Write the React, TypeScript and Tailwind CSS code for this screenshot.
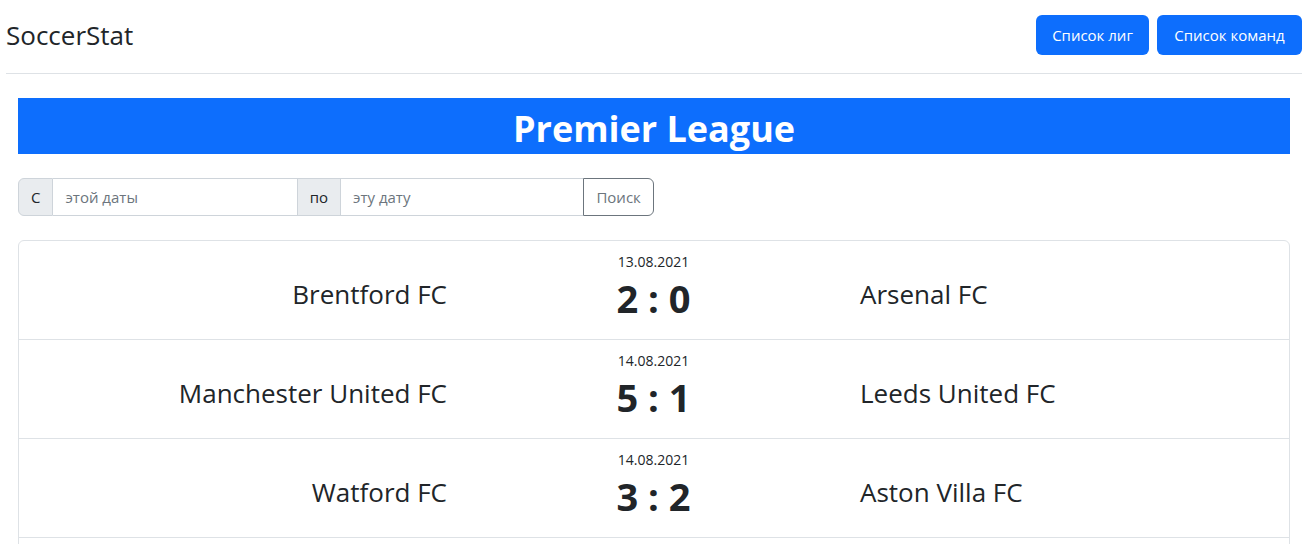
import React from "react";

interface Match {
  date: string;
  home: string;
  away: string;
  score: string;
}

const matches: Match[] = [
  { date: "13.08.2021", home: "Brentford FC", away: "Arsenal FC", score: "2 : 0" },
  { date: "14.08.2021", home: "Manchester United FC", away: "Leeds United FC", score: "5 : 1" },
  { date: "14.08.2021", home: "Watford FC", away: "Aston Villa FC", score: "3 : 2" },
  { date: "14.08.2021", home: "Chelsea FC", away: "Crystal Palace FC", score: "3 : 0" },
];

function Header() {
  return (
    <div className="flex items-center justify-between pt-[15px] pb-[18px] border-b border-[#dee2e6]">
      <span className="text-[26px] leading-none text-[#212529]">SoccerStat</span>
      <div className="flex items-center gap-2">
        <button className="h-10 w-[113px] rounded-md bg-[#0d6efd] text-white text-[15px]">
          Список лиг
        </button>
        <button className="h-10 w-[145px] rounded-md bg-[#0d6efd] text-white text-[15px]">
          Список команд
        </button>
      </div>
    </div>
  );
}

function DateFilter() {
  return (
    <div className="flex h-[38px] w-[636px] text-[15px]">
      <span className="flex items-center px-3 bg-[#e9ecef] border border-[#ced4da] rounded-l-md text-[#212529]">
        С
      </span>
      <input
        className="w-[244px] px-3 border-y border-[#ced4da] outline-none placeholder:text-[#6c757d]"
        placeholder="этой даты"
      />
      <span className="flex items-center px-3 bg-[#e9ecef] border border-[#ced4da] text-[#212529]">
        по
      </span>
      <input
        className="w-[243px] px-3 border-y border-[#ced4da] outline-none placeholder:text-[#6c757d]"
        placeholder="эту дату"
      />
      <button className="w-[71px] border border-[#6c757d] rounded-r-md text-[#6c757d]">
        Поиск
      </button>
    </div>
  );
}

function MatchRow({ match }: { match: Match }) {
  return (
    <div className="grid grid-cols-[428px_413px_1fr] h-[99px] border-b border-[#dee2e6]">
      <div className="flex items-center justify-end pt-[8px] text-[26px] text-[#212529]">
        {match.home}
      </div>
      <div className="flex flex-col items-center pt-[10px] text-[#212529]">
        <span className="text-[14px] leading-[21px]">{match.date}</span>
        <span className="mt-[4px] text-[38px] leading-[45px] font-bold">{match.score}</span>
      </div>
      <div className="flex items-center pt-[8px] text-[26px] text-[#212529]">
        {match.away}
      </div>
    </div>
  );
}

export default function App() {
  return (
    <div className="pl-[6px] pr-[8px] bg-white min-h-screen font-['Open_Sans',sans-serif]">
      <Header />
      <div className="px-3 pt-6 flex flex-col gap-6">
        <h1 className="h-14 flex items-center justify-center pt-[5px] bg-[#0d6efd] text-white text-[36px] font-bold">
          Premier League
        </h1>
        <DateFilter />
        <div className="border border-[#dee2e6] rounded-md">
          {matches.map((m, i) => (
            <MatchRow key={i} match={m} />
          ))}
        </div>
      </div>
    </div>
  );
}
